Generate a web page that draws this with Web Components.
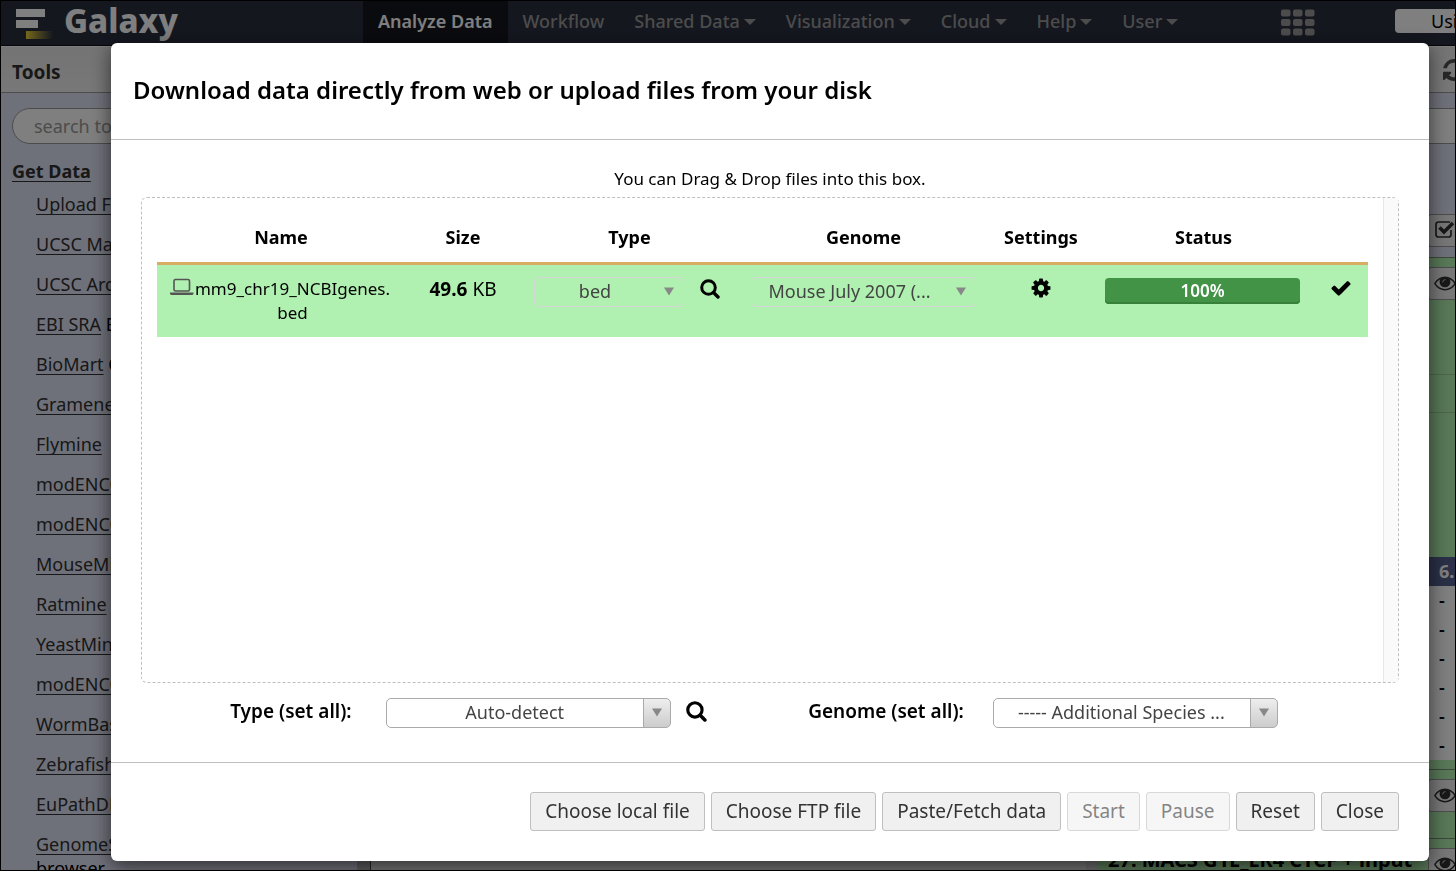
<!DOCTYPE html>
<html lang="en">
<head>
<meta charset="utf-8">
<title>Galaxy</title>
<style>
  html, body { height: 100%; margin: 0; }
  body { overflow: hidden; background: #fff; color: #000; font-family: "Noto Sans", "Open Sans", sans-serif; font-size: 17px; line-height: 24px; text-decoration-skip-ink: none; }
</style>
</head>
<body>
<galaxy-app></galaxy-app>

<script>
const define = (name, html, setup) => {
  const template = document.createElement('template');
  template.innerHTML = html;
  customElements.define(name, class extends HTMLElement {
    connectedCallback() {
      if (this.shadowRoot) return;
      const root = this.attachShadow({ mode: 'open' });
      root.append(template.content.cloneNode(true));
      if (setup) setup(this, root);
    }
  });
};

const ICONS = {
  search: ['0 0 20 20', '<circle cx="8.5" cy="8.5" r="6.8" fill="none" stroke="currentColor" stroke-width="3"/><path d="M13.5 13.5 18 18" stroke="currentColor" stroke-width="3.4" stroke-linecap="round"/>'],
  laptop: ['0 0 24 18', '<rect x="4" y="1.5" width="15.5" height="11.5" rx="1.5" fill="none" stroke="currentColor" stroke-width="1.6"/><path d="M0 14.5h23.5v1q0 1.5-2 1.5H2q-2 0-2-1.5z" fill="currentColor"/>'],
  cog: ['0 0 1792 1792', '<path fill="currentColor" d="M1152 896q0-106-75-181t-181-75-181 75-75 181 75 181 181 75 181-75 75-181zm512-109v222q0 12-8 23t-20 13l-185 28q-19 54-39 91 35 50 107 138 10 12 10 25t-9 23q-27 37-99 108t-94 71q-12 0-26-9l-138-108q-44 23-91 38-16 136-29 186-7 28-36 28h-222q-14 0-24.5-8.5t-11.5-21.5l-28-184q-49-16-90-37l-141 107q-10 9-25 9-14 0-25-11-126-114-165-168-7-10-7-23 0-12 8-23 15-21 51-66.5t54-70.5q-27-50-41-99l-183-27q-13-2-21-12.5t-8-23.5v-222q0-12 8-23t19-13l186-28q14-46 39-92-40-57-107-138-10-12-10-24 0-10 9-23 26-36 98.5-107.5t94.5-71.5q13 0 26 10l138 107q44-23 91-38 16-136 29-186 7-28 36-28h222q14 0 24.5 8.5t11.5 21.5l28 184q49 16 90 37l142-107q9-9 24-9 13 0 25 10 129 119 165 170 7 8 7 22 0 12-8 23-15 21-51 66.5t-54 70.5q26 50 41 98l183 28q13 2 21 12.5t8 23.5z"/>'],
  check: ['0 0 1792 1792', '<path fill="currentColor" d="M1671 566q0 40-28 68l-724 724-136 136q-28 28-68 28t-68-28l-136-136-362-362q-28-28-28-68t28-68l136-136q28-28 68-28t68 28l294 295 656-657q28-28 68-28t68 28l136 136q28 28 28 68z"/>'],
  eye: ['0 256 1792 1408', '<path fill="currentColor" d="M1664 960q-152-236-381-353 61 104 61 225 0 185-131.5 316.5t-316.5 131.5-316.5-131.5-131.5-316.5q0-121 61-225-229 117-381 353 133 205 333.5 326.5t434.5 121.5 434.5-121.5 333.500-326.500zm128 0q0 34-20 69-140 230-376.500 368.500t-499.500 138.500-499.500-139-376.500-368q-20-35-20-69t20-69q140-229 376.500-368t499.500-139 499.500 139 376.500 368q20 35 20 69z"/><circle cx="896" cy="850" r="390" fill="currentColor"/><path d="M700 830q20-180 196-200" fill="none" stroke="#e8e8e8" stroke-width="70" stroke-linecap="round"/>'],
  tick: ['0 0 20 18', '<path d="M16 10v4.5q0 2.500-2.500 2.500h-10Q1 17 1 14.500v-10Q1 2 3.500 2h10q1 0 1.500.3" fill="none" stroke="currentColor" stroke-width="1.700"/><path d="M4.500 7.500 9 12 18 3" fill="none" stroke="currentColor" stroke-width="3.600"/>'],
  refresh: ['128 128 1536 1536', '<path fill="currentColor" d="M1639 1056q0 5-1 7-64 268-268 434.500t-478 166.500q-146 0-282.500-55t-243.500-157l-129 129q-19 19-45 19t-45-19-19-45v-448q0-26 19-45t45-19h448q26 0 45 19t19 45-19 45l-137 137q71 66 161 102t187 36q134 0 250-65t186-179q11-17 53-117 8-23 30-23h192q13 0 22.500 9.500t9.500 22.500zm25-800v448q0 26-19 45t-45 19h-448q-26 0-45-19t-19-45 19-45l138-138q-148-137-349-137-134 0-250 65t-186 179q-11 17-53 117-8 23-30 23h-199q-13 0-22.500-9.500t-9.500-22.500v-7q65-268 270-434.500t480-166.500q146 0 284 55.500t245 156.500l130-129q19-19 45-19t45 19 19 45z"/>'],
  caret: ['0 0 12 6', '<path d="M0 0h12L6 6z" fill="currentColor"/>'],
  arrow: ['0 0 10 8', '<path d="M0 0h10L5 8z" fill="currentColor"/>'],
  grid: ['0 0 34 26', [0, 1, 2].map(r => [0, 1, 2].map(c => `<rect x="${c * 12}" y="${r * 9.5}" width="9.500" height="7" rx="2" fill="currentColor"/>`).join('')).join('')],
  brand: ['0 0 38 32', '<defs><linearGradient id="g"><stop offset="0" stop-color="#e8d038"/><stop offset="1" stop-color="#e8d038" stop-opacity="0"/></linearGradient></defs><path d="M0 0h29v8H0zM0 11h22v8H0z" fill="#fff"/><path d="M10 22h27v8H10z" fill="url(#g)"/>']
};

define('galaxy-icon', `<style>:host{display:inline-block;flex:none;line-height:0}svg{display:block;width:100%;height:100%}</style>`, (host, root) => {
  const [box, body] = ICONS[host.getAttribute('name')];
  root.innerHTML += `<svg viewBox="${box}" aria-hidden="true">${body}</svg>`;
});

define('nav-item', `<style>
  :host{display:block}
  a{display:flex;align-items:center;gap:4px;height:40px;padding:0 15px 2px;color:#999;text-decoration:none;font-size:18px;font-weight:500}
  :host([active]) a{background:#15161f;color:#fff;font-weight:600}
  galaxy-icon{display:none;width:12px;height:6px;margin-top:2px}
  :host([menu]) galaxy-icon{display:block}
</style><a href="#"><slot></slot><galaxy-icon name="caret"></galaxy-icon></a>`);

define('galaxy-masthead', `<style>
  :host{display:flex;align-items:flex-start;height:46px;padding-top:1px;box-sizing:border-box;background:#2a2f3f;border-bottom:1px solid #0b0c14;overflow:hidden}
  .brand{display:flex;flex:0 0 347px;gap:10px;padding-left:16px;color:#fff;font-size:33px;font-weight:800;line-height:40px;text-decoration:none}
  .brand galaxy-icon{width:38px;height:32px;margin-top:8px}
  nav{display:flex;flex:1}
  .grid{width:34px;height:27px;margin:8px 80px 0 0;color:#999}
  .meter{flex:0 0 61px;box-sizing:border-box;height:24px;margin-top:8px;padding-left:36px;border-radius:4px 0 0 4px;background:#fff;font-size:18px;white-space:nowrap;overflow:hidden}
</style>
<a class="brand" href="#"><galaxy-icon name="brand"></galaxy-icon>Galaxy</a>
<nav><nav-item active>Analyze Data</nav-item><nav-item>Workflow</nav-item><nav-item menu>Shared Data</nav-item><nav-item menu>Visualization</nav-item><nav-item menu>Cloud</nav-item><nav-item menu>Help</nav-item><nav-item menu>User</nav-item></nav>
<galaxy-icon class="grid" name="grid"></galaxy-icon><div class="meter">Using 12%</div>`);

define('tool-link', `<style>
  :host{display:block;height:40px;line-height:24px;white-space:nowrap}
  a{color:#303030;text-underline-offset:3px}
</style><a href="#"><slot></slot></a> <slot name="note"></slot>`);

define('tool-panel', `<style>
  :host{display:block;width:371px;flex:none;box-sizing:border-box;background:linear-gradient(#dfe2f4,#dfe2f4) no-repeat,#b8b8b8;background-size:357px 100%;border-right:1px solid #444;overflow:hidden}
  h2{margin:0;height:46px;box-sizing:border-box;padding:13px 12px 0;background:linear-gradient(#e8e8e8,#f0f0f0);border-bottom:1px solid #999;color:#303030;font-size:19px;font-weight:700;line-height:24px}
  input{display:block;width:330px;height:36px;box-sizing:border-box;margin:15px 12px;padding:0 21px;border:1px solid #999;border-radius:18px;background:#fff;font:inherit;font-size:18px}
  input::placeholder{color:#999;opacity:1}
  .section{display:block;margin-left:12px;color:#303030;font-size:18px;font-weight:700;text-underline-offset:3px}
  .list{padding:9px 0 0 36px;font-size:18px}
  .last{height:24px}
</style>
<h2>Tools</h2>
<input type="search" placeholder="search tools" aria-label="search tools">
<a class="section" href="#">Get Data</a>
<div class="list">
<tool-link>Upload File</tool-link><tool-link>UCSC Main</tool-link><tool-link>UCSC Archaea</tool-link>
<tool-link>EBI SRA<span slot="note">ENA SRA</span></tool-link><tool-link>BioMart<span slot="note">Central server</span></tool-link>
<tool-link>GrameneMart</tool-link><tool-link>Flymine</tool-link><tool-link>modENCODE fly</tool-link><tool-link>modENCODE modMine</tool-link>
<tool-link>MouseMine</tool-link><tool-link>Ratmine</tool-link><tool-link>YeastMine</tool-link><tool-link>modENCODE worm</tool-link>
<tool-link>WormBase</tool-link><tool-link>ZebrafishMine</tool-link><tool-link>EuPathDB</tool-link><tool-link class="last">GenomeSpace</tool-link>
<div>browser</div></div>`);

define('history-item', `<style>
  :host{display:flex;justify-content:space-between;box-sizing:border-box;height:69px;padding:9px 0 0 11px;border-top:1px solid #779077;background:#b0f0b0;font-size:20px;font-weight:700;overflow:hidden;white-space:nowrap}
  a{color:#000;text-underline-offset:3px}
  button{width:28px;height:33px;flex:none;padding:0 0 0 5px;border:1px solid #999;border-right:0;border-radius:3px 0 0 3px;background:#efefef;color:#303030;overflow:hidden}
  galaxy-icon{display:block;width:22px;height:17px}
</style><a href="#"><slot></slot></a><button type="button" aria-label="View data"><galaxy-icon name="eye"></galaxy-icon></button>`);

define('history-panel', `<style>
  :host{display:block;width:359px;flex:none;background:#dfe2f4;overflow:hidden}
  header{display:flex;justify-content:flex-end;height:46px;box-sizing:border-box;padding-top:12px;background:linear-gradient(#e8e8e8,#f0f0f0);border-bottom:1px solid #999;color:#505050}
  header galaxy-icon{width:22px;height:22px;margin-right:-9px}
  input{display:block;width:100%;height:36px;box-sizing:border-box;margin:15px 0 70px;border:1px solid #999;border-width:1px 0;background:#fff}
  .bar{display:flex;justify-content:flex-end;height:33px;margin-bottom:10px}
  .bar button{width:28px;padding:0 0 4px 6px;border:1px solid #999;border-right:0;border-radius:3px 0 0 3px;background:#efefef;color:#303030}
  .bar galaxy-icon{display:block;width:20px;height:18px}
  .first{height:117px}
  .line{height:38px;box-sizing:border-box;background:#b0f0b0;border-top:1px solid #98cc98}
  .rest{height:145px}
  .gap{height:9px;background:#b0f0b0}
  table{width:100%;border-collapse:collapse;background:#fff;table-layout:fixed;font-size:18px;font-weight:600}
  th,td{box-sizing:border-box;height:29px;padding:0 0 2px 10px;text-align:left;overflow:hidden;white-space:nowrap}
  th{background:#55608f;color:#fff;font-weight:700}
  col.c{width:27px}
</style>
<header><galaxy-icon name="refresh"></galaxy-icon></header>
<input type="text" aria-label="search datasets">
<div class="bar"><button type="button" aria-label="Operations on multiple datasets"><galaxy-icon name="tick"></galaxy-icon></button></div>
<history-item class="first"></history-item>
<div class="line"></div><div class="line rest"></div>
<table><colgroup><col><col class="c"></colgroup><thead><tr><th></th><th>6.</th></tr></thead>
<tbody><tr><td></td><td>-</td></tr><tr><td></td><td>-</td></tr><tr><td></td><td>-</td></tr><tr><td></td><td>-</td></tr><tr><td></td><td>-</td></tr><tr><td></td><td>-</td></tr></tbody></table>
<div class="gap"></div>
<history-item></history-item>
<history-item>27: MACS G1E_ER4 CTCF + input</history-item>`);

define('select-box', `<style>
  :host{display:grid;position:relative;height:30px}
  select{appearance:none;width:100%;height:30px;box-sizing:border-box;margin:0;padding:0 29px 2px 1px;border:1px solid #aaa;border-radius:5px;background:linear-gradient(#eee,#ccc) right/27px 100% no-repeat,#fff;color:#444;font:inherit;font-size:18px;text-align:center;text-align-last:center;opacity:1}
  .divider{position:absolute;right:27px;top:1px;bottom:1px;width:1px;background:#aaa}
  galaxy-icon{position:absolute;right:9px;top:10px;width:10px;height:9px;color:#888;pointer-events:none}
  :host([flat]) select{background:none;border-color:#d6d6d6}
  :host([flat]) .divider{display:none}
  :host([flat]) galaxy-icon{right:10px}
</style><select></select><span class="divider"></span><galaxy-icon name="arrow"></galaxy-icon>`, (host, root) => {
  const select = root.querySelector('select');
  select.setAttribute('aria-label', host.getAttribute('label'));
  select.add(new Option(host.getAttribute('value')));
});

define('upload-table', `<style>
  :host{display:block}
  table{width:100%;border-collapse:separate;border-spacing:0;table-layout:fixed;text-align:center}
  th{height:24px;padding:11px 0 13px;border-bottom:3px solid #d8ae65;font-size:18px;font-weight:700}
  td{height:48px;padding:12px 0;background:#b0f0b0;vertical-align:top}
  .size{width:116px}.type{width:217px}.genome{width:251px}.settings{width:104px}.status{width:221px}.done{width:54px}
  .name{display:flex;padding:0 14px 0 13px}
  .name galaxy-icon{width:24px;height:18px;margin-top:1px;color:#555}
  .name span{flex:1}
  .pair{display:flex;gap:16px;padding-left:13px}
  .pair select-box{width:150px}
  button{display:inline-block;padding:0;border:0;background:none;color:#000}
  button galaxy-icon,.ok{display:inline-block;width:22px;height:22px}
  .find{height:20px;margin-top:2px}
  .find galaxy-icon{display:block;width:20px;height:20px}
  .pad{padding:0 13px}
  .bar{height:26px;margin:1px 14px 0 12px;border-radius:4px;background:#429345;box-shadow:inset 0 -2px 0 #37803a;color:#fff;font-weight:600;line-height:26px}
  b{font-weight:700}
  .num{font-size:19px}
</style>
<table>
<colgroup><col><col class="size"><col class="type"><col class="genome"><col class="settings"><col class="status"><col class="done"></colgroup>
<thead><tr><th>Name</th><th>Size</th><th>Type</th><th>Genome</th><th>Settings</th><th>Status</th><th></th></tr></thead>
<tbody><tr>
<td><div class="name"><galaxy-icon name="laptop"></galaxy-icon><span>mm9_chr19_NCBIgenes.<br>bed</span></div></td>
<td class="num"><b>49.6</b> KB</td>
<td><div class="pair"><select-box flat label="Type" value="bed"></select-box><button class="find" type="button" aria-label="Type details"><galaxy-icon name="search"></galaxy-icon></button></div></td>
<td><div class="pad"><select-box flat label="Genome" value="Mouse July 2007 (..."></select-box></div></td>
<td><button type="button" aria-label="Settings"><galaxy-icon name="cog"></galaxy-icon></button></td>
<td><div class="bar" role="progressbar" aria-valuenow="100">100%</div></td>
<td><galaxy-icon class="ok" name="check"></galaxy-icon></td>
</tr></tbody></table>`);

define('push-button', `<style>
  :host{display:block}
  button{height:39px;padding:0 14px 2px;border:1px solid #bfbfbf;border-radius:3px;background:#f0f0f0;color:#333;font:inherit;font-size:19px;white-space:nowrap}
  button:disabled{opacity:.6}
</style><button type="button"><slot></slot></button>`, (host, root) => {
  root.querySelector('button').disabled = host.hasAttribute('disabled');
});

define('upload-dialog', `<style>
  :host{display:block;border-radius:6px;background:#fff;box-shadow:0 5px 20px rgba(0,0,0,.6)}
  h1{margin:0;padding:35px 22px 37px;border-bottom:1px solid #bfbfbf;font-size:24px;font-weight:600;line-height:24px}
  .body{padding:27px 30px 34px}
  p{margin:0 0 6px;text-align:center;font-size:17px}
  .drop{display:flex;height:484px;border:1px dashed #bfbfbf;border-radius:6px}
  upload-table{flex:1;padding:16px 15px}
  .scroll{width:14px;background:#fafafa;border-left:1px solid #e7e7e7}
  .all{display:flex;justify-content:center;align-items:flex-start;margin-top:15px;padding-right:32px}
  .label{min-width:127px;font-size:19px;font-weight:600;line-height:26px}
  .all select-box{width:285px;margin-left:29px}
  .all button{width:21px;height:21px;margin:3px 101px 0 15px;padding:0;border:0;background:none;color:#000}
  .all button galaxy-icon{display:block;width:21px;height:21px}
  footer{display:flex;justify-content:flex-end;gap:6px;padding:29px 30px 30px;border-top:1px solid #bfbfbf}
</style>
<h1>Download data directly from web or upload files from your disk</h1>
<div class="body">
<p>You can Drag &amp; Drop files into this box.</p>
<div class="drop"><upload-table></upload-table><div class="scroll"></div></div>
<div class="all"><span class="label">Type (set all):</span><select-box label="Type (set all)" value="Auto-detect"></select-box><button type="button" aria-label="Type details"><galaxy-icon name="search"></galaxy-icon></button>
<span class="label">Genome (set all):</span><select-box label="Genome (set all)" value="----- Additional Species ..."></select-box></div>
</div>
<footer><push-button>Choose local file</push-button><push-button>Choose FTP file</push-button><push-button>Paste/Fetch data</push-button><push-button disabled>Start</push-button><push-button disabled>Pause</push-button><push-button>Reset</push-button><push-button>Close</push-button></footer>`);

define('galaxy-app', `<style>
  :host{display:flex;flex-direction:column;height:100%}
  main{display:flex;flex:1;min-height:0;padding-top:1px}
  .center{flex:1;background:#e8e8e8;border-right:11px solid #d8d8d8}
  .overlay{position:fixed;inset:0;padding:42px 26px 0 110px;border:1px solid #000;background:rgba(0,0,0,.5);overflow:hidden}
</style>
<galaxy-masthead></galaxy-masthead>
<main><tool-panel></tool-panel><div class="center"></div><history-panel></history-panel></main>
<div class="overlay" role="dialog" aria-modal="true"><upload-dialog></upload-dialog></div>`);
</script>
</body>
</html>
